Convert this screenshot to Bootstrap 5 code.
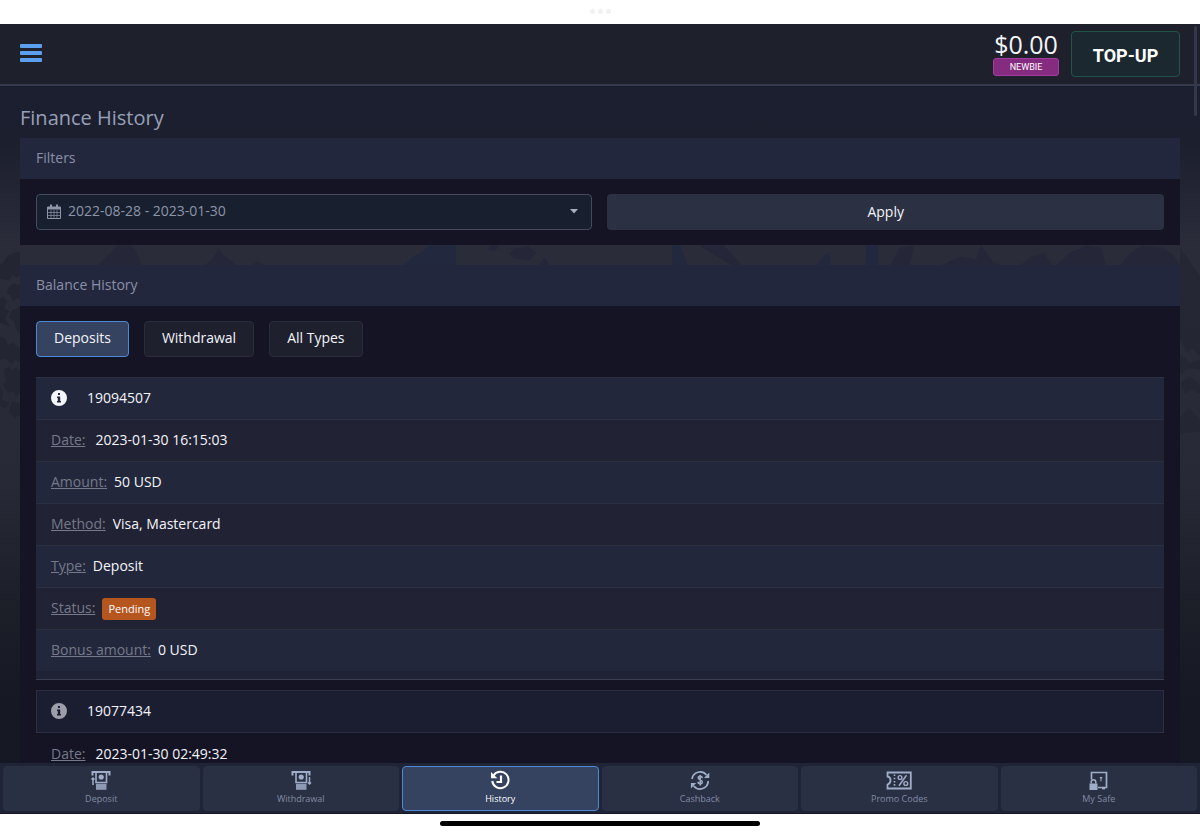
<!DOCTYPE html>
<html lang="en">
<head>
<meta charset="utf-8">
<meta name="viewport" content="width=device-width, initial-scale=1">
<title>Finance History</title>
<link href="https://cdn.jsdelivr.net/npm/bootstrap@5.3.0/dist/css/bootstrap.min.css" rel="stylesheet">
<style>
body{font-family:"Open Sans","Noto Sans",sans-serif;font-size:14px;line-height:20px;color:#f4f5fa;background:#fff}
.status-strip{height:25px;gap:3px}
.status-strip i{width:5px;height:5px;border-radius:50%;background:#f1f1f1}
.home-strip{height:21px;padding-bottom:2px}
.home-strip i{width:320px;height:5px;border-radius:3px;background:#000}
.app-shell{background:#1b1e2f}
.scene{z-index:0}
.app-top{height:62px;background:#1e212c;border-bottom:2px solid #363a4d;padding:1px 20px 0;z-index:1}
.menu-btn{width:22px;height:22px;color:#5b9fee}
.balance{font-size:25px;line-height:24px;margin-bottom:2px}
.rank{font-family:"Roboto",sans-serif;font-size:9px;line-height:16px;width:66px;background:#852b80;border:1px solid #a53ba0;border-radius:3px;font-weight:400;padding:0}
.topup{width:109px;height:46px;padding:3px 0 0;border:1px solid #215548;border-radius:4px;background:#1c2830;color:#fff;font:700 18px/24px "Roboto",sans-serif}
.thumb{top:2px;right:3px;width:3px;height:90px;border-radius:2px;background:#34374a;z-index:3}
.app-main{padding:16px 20px 0;scrollbar-width:none;z-index:1}
.app-main::-webkit-scrollbar{display:none}
h1{font-size:20px;line-height:28px;font-weight:400;color:#98a0b8;margin:2px 0 6px}
.panel{background:#141425}
.panel + .panel{margin-top:20px}
.panel h2{font-size:14px;line-height:20px;font-weight:400;color:#8a90a8;background:#22273d;margin:0;padding:10px 16px 11px}
.panel-in{padding:15px 16px}
.filters{gap:15px}
.date-box{position:relative;color:#8d95a8}
.date-box svg{position:absolute;left:11px;top:10px;pointer-events:none}
.date-box .caret{left:auto;right:14px;top:15px}
.date-box select{appearance:none;width:100%;height:36px;background:#18202f;border:1px solid #434b5e;border-radius:4px;color:#8d95a8;padding:0 30px 2px 31px;font-size:14px}
.apply{height:36px;background:#2b3142;border:0;border-radius:4px;color:#f4f5fa}
.tabs{margin-bottom:20px}
.tab-btn{height:36px;padding:0 17px 2px;background:#1e202e;border:1px solid #292c3a;border-radius:4px;color:#f4f5fa}
.tab-btn.on{background:#354260;border-color:#4d8ad6}
.record{margin:0 0 10px;background:#202336;border-bottom:1px solid #3a3e50;padding-bottom:8px}
.record .item{height:42px;padding:0 15px;border-top:1px solid #2b2f42;background:#212234}
.record .item:nth-child(odd){background:#22273b}
.record .item svg{margin-right:20px}
.record .item dt{font-weight:400;color:#757989;text-decoration:underline;margin-right:7px}
.record .item dd{margin:0}
.record .item dt.wide{margin-right:10px}
.record.older{background:none;border:0}
.record.older .item:nth-child(n){background:none;border-color:transparent}
.record.older .item:first-child{height:43px;padding:0 14px;background:#1b1d31;border:1px solid #2b2e42}
.record .item .pending{background:#b5561f;border-radius:3px;font-size:11px;line-height:22px;padding:0 6px;color:#fff;margin-top:2px}
.dock{background:#1f2436;padding:3px 3px 2px;gap:3px;border-bottom:1px solid #15172a;z-index:2}
.dock a{flex:1 1 0;height:45px;border-radius:4px;border:1px solid #2a3043;background:#2a3043;color:#818ba4;font-size:9px;line-height:12px;text-decoration:none;padding-top:2px}
.dock svg{display:block;height:22px;width:28px;margin-bottom:2px;color:#a0adc8}
.dock a.on{background:#354260;border-color:#4d8ad6;color:#fff}
.dock a.on svg{color:#fff}
</style>
</head>
<body>
<svg width="0" height="0" class="position-absolute" aria-hidden="true">
<symbol id="info" viewBox="0 0 16 16"><path fill="currentColor" fill-rule="evenodd" d="M8 0a8 8 0 1 0 0 16A8 8 0 0 0 8 0ZM7 3h2v2H7Zm-1 3.500h3.200v4.500H10v1.500H6V11h.8V8H6Z"/></symbol>
</svg>
<div class="d-flex flex-column vh-100">
<div class="status-strip d-flex justify-content-center align-items-center"><i></i><i></i><i></i></div>
<div class="app-shell flex-grow-1 d-flex flex-column position-relative overflow-hidden">
<svg class="scene position-absolute top-0 start-0 w-100 h-100" viewBox="0 0 1200 789" preserveAspectRatio="none" aria-hidden="true">
<defs>
<linearGradient id="sky" x2="0" y2="1"><stop stop-color="#1b1e2f"/><stop offset=".15" stop-color="#1c1f2e"/><stop offset=".28" stop-color="#2a2c3a"/><stop offset=".42" stop-color="#292b38"/><stop offset=".58" stop-color="#272936"/><stop offset=".74" stop-color="#1c1f28"/><stop offset=".86" stop-color="#161923"/><stop offset="1" stop-color="#151722"/></linearGradient>
</defs>
<path fill="url(#sky)" d="M0 0h1200v789H0Z"/>
<g fill="#252738"><path d="M98 241l12-12 7-8 6 0 7-1 6 6 6 15ZM205 241l8-8 6-9 5 8 8 4 3 5ZM250 241l8-4 6 4ZM490 221h10l-6 6-6-2ZM514 224l14-2 8 6-6 8-16-2-4-5ZM538 241l7-8 4 8ZM700 221h24l18 20h-10l-20-12ZM890 241l10-18 14-2-4 20ZM940 241l22-9 14 3 5-14 12 16 7 4ZM1020 241l12-9 12-4 8 13ZM1056 241l14-13 17-7 14 2 5 18ZM1120 241l10-12 12-8 20 2 12 8 6 10Z"/></g>
<g fill="#22283d"><path d="M403 241l10-9 7-3 9-8h27v20ZM672 221h8l8 20h-16ZM817 241l7-10 6-3v13ZM866 221h12v20h-12Z"/></g>
<g fill="#232532"><path d="M0 241l5-5 4-6 11-3v24l-4 2-3-3-5 6-8-2ZM9 262l4-3 7 2v14l-3-2-4 4-2-6-5-2ZM0 274l3-2 4 5-3 6 5 4-4 7 5 8-10-4ZM12 286l8-4v27l-4-4-2-8-5-4ZM0 312l5 2 3 7 5-3 7 6v14l-5-3-3 5-6-6-6 1ZM4 345l5-3 3 5 4-4 4 3v22l-4 4-3-6-5 2-5-7 3-5ZM0 362l3 5-1 8 7 3-3 6-6-3ZM12 377l8 2v11l-5 3-6-6Z"/><path d="M1180 224l8 10 12 18v80l-8-8-5 4-7-13ZM1180 330l6 4 4 5 10-4v10l-12-1-8 6ZM1181 358l9-6 10 8v9l-9-4-6 5ZM1180 393l9-10 11 12v12l-20 1Z" opacity=".7"/></g>
</svg>
<header class="app-top d-flex align-items-center position-relative flex-shrink-0">
<button class="menu-btn btn p-0 border-0 d-flex" type="button" aria-label="Menu"><svg width="22" height="22" viewBox="0 0 22 22" fill="currentColor"><rect y="1" width="22" height="4" rx="1"/><rect y="8" width="22" height="4" rx="1"/><rect y="15" width="22" height="4" rx="1"/></svg></button>
<div class="ms-auto me-2 pe-1 d-flex flex-column align-items-center"><span class="balance">$0.00</span><span class="rank badge">NEWBIE</span></div>
<button class="topup" type="button">TOP-UP</button>
</header>
<i class="thumb position-absolute"></i>
<main class="app-main flex-grow-1 overflow-auto position-relative">
<h1>Finance History</h1>
<section class="panel">
<h2>Filters</h2>
<form class="panel-in filters d-flex">
<div class="date-box w-50">
<svg width="14" height="15" viewBox="0 0 14 15" fill="none" stroke="currentColor"><path d="M.5 3.500h13v11H.5Z"/><path stroke-width=".7" d="M.5 8.500h13M.5 11.500h13M4 6v8.500M7 6v8.500M10 6v8.500"/><path fill="currentColor" d="M.5 3h13v2H.5Z"/><path stroke-width="2" d="M4 .5v3M10 .5v3"/></svg>
<select aria-label="Date range"><option>2022-08-28 - 2023-01-30</option></select>
<svg class="caret" width="8" height="5" viewBox="0 0 8 5"><path fill="#a8aebf" d="M0 0h8L4 4.500Z"/></svg>
</div>
<button class="apply w-50" type="button">Apply</button>
</form>
</section>
<section class="panel">
<h2>Balance History</h2>
<div class="panel-in">
<div class="d-flex filters tabs">
<button class="tab-btn on" type="button">Deposits</button>
<button class="tab-btn" type="button">Withdrawal</button>
<button class="tab-btn" type="button">All Types</button>
</div>
<dl class="record">
<div class="item d-flex align-items-center"><svg width="16" height="16"><use href="#info"/></svg><dd>19094507</dd></div>
<div class="item d-flex align-items-center"><dt class="wide">Date:</dt><dd>2023-01-30 16:15:03</dd></div>
<div class="item d-flex align-items-center"><dt>Amount:</dt><dd>50 USD</dd></div>
<div class="item d-flex align-items-center"><dt>Method:</dt><dd>Visa, Mastercard</dd></div>
<div class="item d-flex align-items-center"><dt>Type:</dt><dd>Deposit</dd></div>
<div class="item d-flex align-items-center"><dt>Status:</dt><dd class="pending">Pending</dd></div>
<div class="item d-flex align-items-center"><dt>Bonus amount:</dt><dd>0 USD</dd></div>
</dl>
<dl class="record older">
<div class="item d-flex align-items-center"><svg width="16" height="16" opacity=".6"><use href="#info"/></svg><dd>19077434</dd></div>
<div class="item d-flex align-items-center"><dt class="wide">Date:</dt><dd>2023-01-30 02:49:32</dd></div>
</dl>
</div>
</section>
</main>
<nav class="dock d-flex position-relative flex-shrink-0">
<a href="#" class="d-flex flex-column align-items-center"><svg viewBox="0 0 28 22" fill="none" stroke="currentColor" stroke-width="2"><path d="M5.500 6.500V3h17v3.500"/><path stroke-width="1.600" d="M9 3v10.500h10.500V3"/><circle cx="14.200" cy="8" r="2.600" fill="currentColor" stroke="none"/><path fill="currentColor" stroke="none" d="M9 14.800h10.500v6H9Z" opacity=".85"/><path stroke-width="1.500" d="M6 9v7M4.500 10.500L6 9l1.500 1.500"/></svg>Deposit</a>
<a href="#" class="d-flex flex-column align-items-center"><svg viewBox="0 0 28 22" fill="none" stroke="currentColor" stroke-width="2"><path d="M5.500 6.500V3h17v3.500"/><path stroke-width="1.600" d="M9 3v10.500h10.500V3"/><circle cx="14.200" cy="8" r="2.600" fill="currentColor" stroke="none"/><path fill="currentColor" stroke="none" d="M9 14.800h10.500v6H9Z" opacity=".85"/><path stroke-width="1.500" d="M22.500 8v7M21 13.500l1.500 1.500 1.500-1.500"/></svg>Withdrawal</a>
<a href="#" class="d-flex flex-column align-items-center on"><svg viewBox="0 0 28 22" fill="none" stroke="currentColor" stroke-width="2"><path d="M7.300 6.700A8.200 8.200 0 1 1 6.200 12"/><path fill="currentColor" stroke="none" d="M5 3v6.300h6.300Z"/><path stroke-width="2.200" d="M15 6.500V13h-4.500"/></svg>History</a>
<a href="#" class="d-flex flex-column align-items-center"><svg viewBox="0 0 28 22" fill="none" stroke="currentColor" stroke-width="1.800"><path d="M6 10A8.200 8.200 0 0 1 20.500 6M22.200 12A8.200 8.200 0 0 1 7.700 17"/><path fill="currentColor" stroke="none" d="M23.300 3.500V9H18ZM4.900 19.500v-5.500h5.300Z"/><path stroke-width="1.500" d="M16.200 9.200c0-2.600-4-2.600-4-.4 0 2.600 4.100 1.600 4.100 4.200 0 2.500-4.300 2.300-4.300-.2M14.200 6v10.500"/></svg>Cashback</a>
<a href="#" class="d-flex flex-column align-items-center"><svg viewBox="0 0 28 22" fill="none" stroke="currentColor" stroke-width="1.800"><path d="M2.500 3.500h23.300v16H2.500v-4c4-1 4-7.500 0-8Z"/><path stroke-dasharray="1.600 1.600" stroke-width="1.600" d="M9.500 5.500v13"/><path stroke-width="1.500" d="M21.500 6.300l-7.500 10.500"/><circle cx="15" cy="8.500" r="1.900" stroke-width="1.400"/><circle cx="20.800" cy="14.500" r="1.900" stroke-width="1.400"/></svg>Promo Codes</a>
<a href="#" class="d-flex flex-column align-items-center"><svg viewBox="0 0 28 22" fill="none" stroke="currentColor" stroke-width="1.700"><path d="M6.500 10.500V3.500H21.500v15H13"/><path d="M17 19.500h3"/><path fill="currentColor" stroke="none" d="M14.500 8h3l-1 2v2.500h-1V10ZM4.500 14.500h8v6.500h-8Z"/><path stroke-width="1.500" d="M6.200 14.500V13a2.300 2.300 0 0 1 4.600 0v1.500"/></svg>My Safe</a>
</nav>
</div>
<div class="home-strip d-flex justify-content-center align-items-center"><i></i></div>
</div>
<script src="https://cdn.jsdelivr.net/npm/bootstrap@5.3.0/dist/js/bootstrap.bundle.min.js"></script>
</body>
</html>
